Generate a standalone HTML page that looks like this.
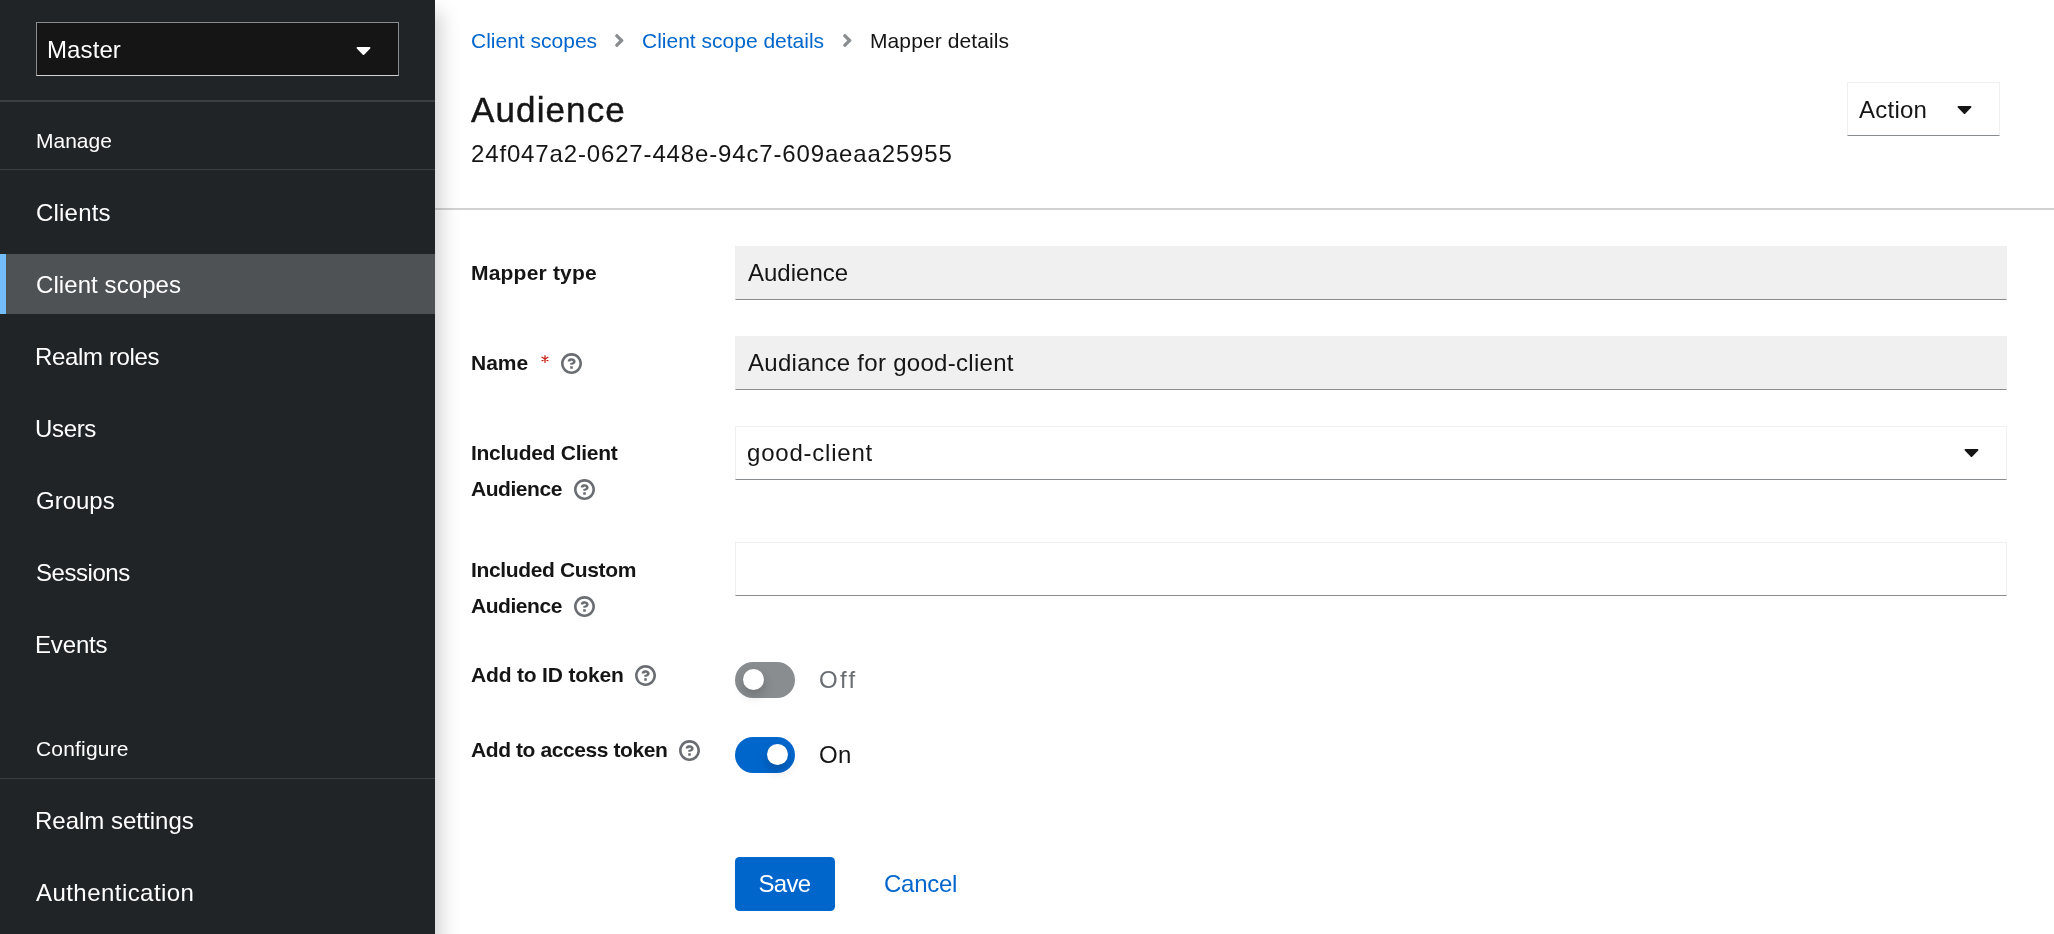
<!DOCTYPE html>
<html>
<head>
<meta charset="utf-8">
<title>Mapper details</title>
<style>
*{box-sizing:border-box;margin:0;padding:0}
html,body{width:2054px;height:934px;overflow:hidden;background:#fff}
body{font-family:"Liberation Sans",sans-serif;color:#151515;position:relative}
#wrap{position:absolute;left:0;top:0;width:2054px;height:934px;overflow:hidden;will-change:transform}
.abs{position:absolute;white-space:nowrap}
/* sidebar */
#side{z-index:5;box-shadow:18px 0 18px -12px rgba(3,3,3,.18);position:absolute;left:0;top:0;width:435px;height:990px;background:#212427;color:#fff}
#realm{position:absolute;left:36px;top:22px;width:363px;height:54px;background:#151515;border:1px solid #8a8d90;border-bottom-color:#d2d2d2}
.nav{position:absolute;left:36px;font-size:24px;line-height:30px;color:#fff;white-space:nowrap}
.sec{position:absolute;left:36px;font-size:21px;line-height:30px;color:#fff;white-space:nowrap}
.hr{position:absolute;left:0;width:435px;background:#3c3f42}
/* main */
.bc{position:absolute;top:26px;font-size:21px;line-height:30px;white-space:nowrap}
.lnk{color:#0066cc}
.lbl{position:absolute;left:471px;font-size:21px;line-height:30px;font-weight:bold;color:#151515;white-space:nowrap}
.inp{position:absolute;left:735px;width:1272px;height:54px;border:1px solid #f0f0f0;border-bottom:1px solid #8a8d90;background:#fff;font-size:24px;line-height:52px;padding-left:12px;white-space:nowrap}
.inp.ro{background:#f0f0f0}
.knob{width:21px;height:21px;border-radius:50%;background:#fff;box-shadow:0 6px 12px 0 rgba(3,3,3,.2)}
.help{position:absolute;width:21px;height:21px}
</style>
</head>
<body>
<div id="wrap">
<svg width="0" height="0" style="position:absolute">
<defs>
<symbol id="q" viewBox="0 0 1024 1024"><path d="M521.3,576 C627.5,576 713.7,502 713.7,413.7 C713.7,325.4 627.6,253.6 521.3,253.6 C366,253.6 334.5,337.7 329.2,407.2 C329.2,414.3 335.2,416 343.5,416 L445,416 C450.5,416 458,415.5 460.8,406.5 C460.8,362.6 582.9,357.1 582.9,413.6 C582.9,441.9 556.2,470.9 521.3,473 C486.4,475.1 447.3,479.8 447.3,521.7 L447.3,553.8 C447.3,570.8 456.1,576 472,576 C487.9,576 521.3,576 521.3,576 M575.3,751.3 L575.3,655.3 C575.3,648.3 570.7,640 563.9,640 L460,640 C453.2,640 448,647.4 448,654.4 L448,751.3 C448,758.3 453.2,768 460,768 L563.8,768 C570.6,768 575.3,758.3 575.3,751.3 M512,896 C300.2,896 128,723.9 128,512 C128,300.3 300.2,128 512,128 C723.8,128 896,300.2 896,512 C896,723.8 723.7,896 512,896 M512.1,0 C229.7,0 0,229.8 0,512 C0,794.2 229.8,1024 512.1,1024 C794.4,1024 1024,794.3 1024,512 C1024,229.7 794.4,0 512.1,0"/></symbol>
<symbol id="ang" viewBox="0 0 256 512"><path d="M224.3 273l-136 136c-9.400 9.400-24.600 9.400-33.900 0l-22.600-22.600c-9.400-9.400-9.400-24.600 0-33.900l96.400-96.400-96.400-96.400c-9.400-9.400-9.400-24.600 0-33.900L54.300 103c9.400-9.400 24.600-9.400 33.900 0l136 136c9.500 9.400 9.500 24.600.1 34z"/></symbol>
<symbol id="car" viewBox="0 0 320 512"><path d="M31.300 192h257.300c17.800 0 26.700 21.500 14.100 34.100L174.100 354.800c-7.800 7.800-20.500 7.800-28.300 0L17.200 226.100C4.600 213.500 13.500 192 31.300 192z"/></symbol>
</defs></svg>
<div id="side">
  <div id="realm"></div>
  <div class="abs" style="left:47px;top:35px;font-size:24px;line-height:30px;color:#fff;letter-spacing:.1px">Master</div>
  <svg class="abs" style="left:355.5px;top:37.5px;fill:#fff" width="15" height="24"><use href="#car"/></svg>
  <div class="hr" style="top:100px;height:2px"></div>
  <div class="sec" style="top:126px">Manage</div>
  <div class="hr" style="top:169px;height:1px"></div>
  <div class="nav" style="top:198px;letter-spacing:.2px">Clients</div>
  <div class="abs" style="left:0;top:254px;width:435px;height:60px;background:#4f5255"></div>
  <div class="abs" style="left:0;top:254px;width:6px;height:60px;background:#73bcf7"></div>
  <div class="nav" style="top:270px;letter-spacing:.08px">Client scopes</div>
  <div class="nav" style="left:35px;top:342px;letter-spacing:-.35px">Realm roles</div>
  <div class="nav" style="left:35px;top:414px;letter-spacing:-.35px">Users</div>
  <div class="nav" style="top:486px">Groups</div>
  <div class="nav" style="top:558px;letter-spacing:-.45px">Sessions</div>
  <div class="nav" style="left:35px;top:630px;letter-spacing:-.15px">Events</div>
  <div class="sec" style="top:734px;letter-spacing:.18px">Configure</div>
  <div class="hr" style="top:778px;height:1px"></div>
  <div class="nav" style="left:35px;top:806px">Realm settings</div>
  <div class="nav" style="top:878px;letter-spacing:.45px">Authentication</div>
</div>

<!-- breadcrumb -->
<div class="bc lnk" style="left:471px">Client scopes</div>
<div class="bc lnk" style="left:642px">Client scope details</div>
<div class="bc" style="left:870px;letter-spacing:.1px">Mapper details</div>
<svg class="abs" style="left:614px;top:30px;fill:#8a8d90" width="10.5" height="21"><use href="#ang"/></svg>
<svg class="abs" style="left:842px;top:30px;fill:#8a8d90" width="10.5" height="21"><use href="#ang"/></svg>

<!-- title -->
<div class="abs" style="left:471px;top:87px;font-size:35px;line-height:46px;letter-spacing:1.12px;-webkit-text-stroke:.45px #151515">Audience</div>
<div class="abs" style="left:471px;top:139px;font-size:24px;line-height:30px;letter-spacing:.85px">24f047a2-0627-448e-94c7-609aeaa25955</div>

<!-- action -->
<div class="abs" style="left:1847px;top:82px;width:153px;height:54px;border:1px solid #f0f0f0;border-bottom:1px solid #8a8d90;background:#fff"></div>
<div class="abs" style="left:1859px;top:95px;font-size:24px;line-height:30px;letter-spacing:.25px">Action</div>
<svg class="abs" style="left:1956.5px;top:97px;fill:#151515" width="15" height="24"><use href="#car"/></svg>

<div class="abs" style="left:435px;top:208px;width:1619px;height:2px;background:#d2d2d2"></div>

<!-- form -->
<div class="lbl" style="top:258px;letter-spacing:.2px">Mapper type</div>
<div class="inp ro" style="top:246px">Audience</div>

<div class="lbl" style="top:348px">Name</div>
<svg class="abs" style="left:538.5px;top:353px" width="12" height="12" viewBox="-6 -6 12 12"><g stroke="#c9190b" stroke-width="1.2" stroke-linecap="round"><path d="M0-3.5V3.5M-3-1.75L3 1.75M-3 1.75L3-1.75"/></g></svg>
<svg class="help" style="left:561px;top:353px;fill:#6a6e73"><use href="#q"/></svg>
<div class="inp ro" style="top:336px;letter-spacing:.29px">Audiance for good-client</div>

<div class="lbl" style="top:438px;letter-spacing:-.27px">Included Client</div>
<div class="lbl" style="top:474px;letter-spacing:-.45px">Audience</div>
<svg class="help" style="left:574px;top:479px;fill:#6a6e73"><use href="#q"/></svg>
<div class="inp" style="top:426px;letter-spacing:.78px;padding-left:11px">good-client</div>
<svg class="abs" style="left:1963.5px;top:440px;fill:#151515" width="15" height="24"><use href="#car"/></svg>

<div class="lbl" style="top:555px;letter-spacing:-.36px">Included Custom</div>
<div class="lbl" style="top:591px;letter-spacing:-.45px">Audience</div>
<svg class="help" style="left:574px;top:596px;fill:#6a6e73"><use href="#q"/></svg>
<div class="inp" style="top:542px"></div>

<div class="lbl" style="top:660px;letter-spacing:-.17px">Add to ID token</div>
<svg class="help" style="left:635px;top:665px;fill:#6a6e73"><use href="#q"/></svg>
<div class="lbl" style="top:735px;letter-spacing:-.41px">Add to access token</div>
<svg class="help" style="left:679px;top:740px;fill:#6a6e73"><use href="#q"/></svg>
<!-- toggles -->
<div class="abs" style="left:735px;top:662px;width:60px;height:36px;border-radius:18px;background:#8a8d90"></div>
<div class="abs knob" style="left:743px;top:669px"></div>
<div class="abs" style="left:819px;top:665px;font-size:24px;line-height:30px;color:#6a6e73;letter-spacing:2.3px">Off</div>
<div class="abs" style="left:735px;top:737px;width:60px;height:36px;border-radius:18px;background:#0066cc"></div>
<div class="abs knob" style="left:767px;top:744px"></div>
<div class="abs" style="left:819px;top:740px;font-size:24px;line-height:30px;color:#151515;letter-spacing:.3px">On</div>

<div class="abs" style="left:735px;top:857px;width:100px;height:54px;background:#0066cc;border-radius:4.5px;color:#fff;font-size:24px;line-height:54px;padding-left:23.5px;letter-spacing:-.7px">Save</div>
<div class="abs lnk" style="left:884px;top:869px;font-size:24px;line-height:30px;letter-spacing:-.27px">Cancel</div>
</div>
</body>
</html>
